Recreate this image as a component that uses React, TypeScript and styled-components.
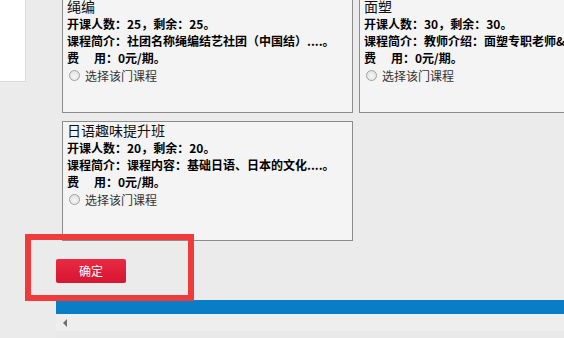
import styled, { createGlobalStyle } from 'styled-components';

const GlobalStyle = createGlobalStyle`
  body {
    margin: 0;
    background: #ebebeb;
  }
`;

const Page = styled.div`
  position: relative;
  width: 564px;
  height: 338px;
  overflow: hidden;
  display: flex;
  background: #ebebeb;
  font-family: 'Noto Sans CJK SC', 'Liberation Sans', sans-serif;
  color: #000;
`;

const Sidebar = styled.aside`
  flex: 0 0 26px;
  height: 82px;
  box-sizing: border-box;
  background: #fff;
  border-right: 1px solid #dcdcdc;
  border-bottom: 1px solid #dcdcdc;
`;

const Main = styled.main`
  flex: 1;
  min-width: 0;
  margin-left: 30px;
  display: flex;
  flex-direction: column;
`;

const CardGrid = styled.div`
  display: grid;
  grid-template-columns: repeat(2, 291px);
  grid-template-rows: 116px 120px;
  column-gap: 6px;
  row-gap: 8px;
  margin: -3px 0 0 6px;
`;

const Card = styled.div`
  box-sizing: border-box;
  border: 1px solid #8c8c8c;
  background: #f4f4f4;
  padding: 0 5px 0 4px;
  white-space: nowrap;
  overflow: hidden;
`;

const CardTitle = styled.div`
  font-size: 14px;
  line-height: 17px;
  color: #111;
`;

const InfoLine = styled.div`
  font-size: 12px;
  font-weight: bold;
  line-height: 17px;
`;

const FeeGap = styled.span`
  display: inline-block;
  width: 15px;
`;

const RadioRow = styled.label`
  display: flex;
  align-items: center;
  gap: 5px;
  height: 18px;
  padding-left: 2px;
  font-size: 12px;
  color: #333;
`;

const Radio = styled.span`
  width: 11px;
  height: 11px;
  box-sizing: border-box;
  border-radius: 50%;
  border: 1px solid #a0a0a0;
  background: radial-gradient(circle at 50% 60%, #f6f6f6 0%, #dcdcdc 100%);
`;

const ButtonRow = styled.div`
  margin-top: 18px;
  display: flex;
`;

const ConfirmButton = styled.button`
  width: 70px;
  height: 24px;
  border: none;
  border-radius: 2px;
  padding: 0;
  background: linear-gradient(#ea2a42, #d51532);
  color: #fff;
  font-family: inherit;
  font-size: 12px;
  line-height: 24px;
`;

const BlueBar = styled.div`
  margin-top: 17px;
  height: 14px;
  background: #087ec7;
`;

const ScrollTrack = styled.div`
  height: 24px;
  box-sizing: border-box;
  background: #eeeeee;
  border-bottom: 7px solid #e9e9e9;
  padding: 5px 0 0 7px;
`;

const ArrowLeft = styled.span`
  display: block;
  width: 0;
  height: 0;
  border-top: 4px solid transparent;
  border-bottom: 4px solid transparent;
  border-right: 4px solid #6f6f6f;
`;

const Highlight = styled.div`
  position: absolute;
  left: 25px;
  top: 234px;
  width: 169px;
  height: 67px;
  box-sizing: border-box;
  border: 6px solid #f03b3d;
`;

type Course = {
  title: string;
  total: number;
  intro: string;
};

const courses: Course[] = [
  { title: '绳编', total: 25, intro: '社团名称绳编结艺社团（中国结）....。' },
  { title: '面塑', total: 30, intro: '教师介绍：面塑专职老师&nbsp;具有多年教学经验' },
  { title: '日语趣味提升班', total: 20, intro: '课程内容：基础日语、日本的文化....。' },
];

const App = () => {
  return (
    <>
      <GlobalStyle />
      <Page>
        <Sidebar />
        <Main>
          <CardGrid>
            {courses.map((c) => (
              <Card key={c.title}>
                <CardTitle>{c.title}</CardTitle>
                <InfoLine>
                  开课人数：{c.total}，剩余：{c.total}。
                </InfoLine>
                <InfoLine>课程简介：{c.intro}</InfoLine>
                <InfoLine>
                  费<FeeGap />用：0元/期。
                </InfoLine>
                <RadioRow>
                  <Radio />
                  选择该门课程
                </RadioRow>
              </Card>
            ))}
          </CardGrid>
          <ButtonRow>
            <ConfirmButton>确定</ConfirmButton>
          </ButtonRow>
          <BlueBar />
          <ScrollTrack>
            <ArrowLeft />
          </ScrollTrack>
        </Main>
        <Highlight />
      </Page>
    </>
  );
};

export default App;
